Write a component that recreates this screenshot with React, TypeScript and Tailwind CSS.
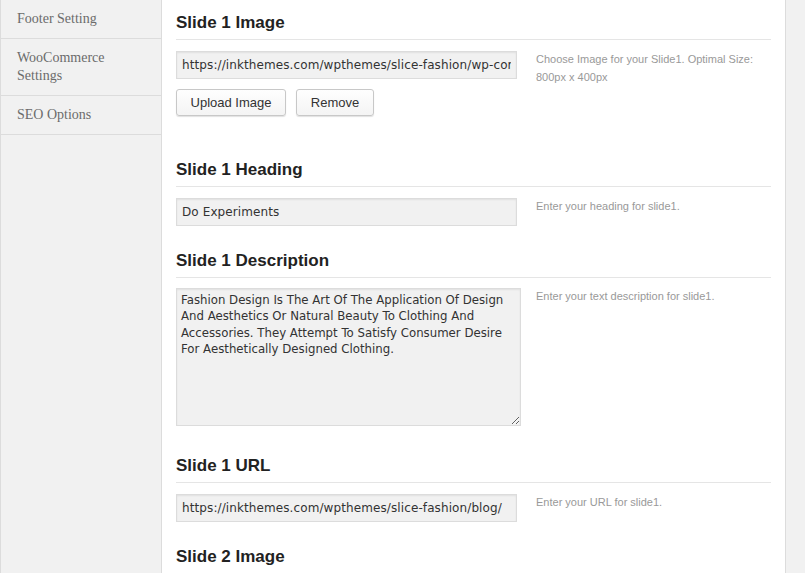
import React from 'react';

const menu = ['Footer Setting', 'WooCommerce Settings', 'SEO Options'];

const inputCls =
  "h-[28px] w-[341px] bg-[#f1f1f1] border border-[#dcdcdc] shadow-[inset_0_1px_2px_rgba(0,0,0,0.07)] px-[5px] text-[12px] tracking-[0.1px] text-[#333] font-['DejaVu_Sans',sans-serif] outline-none";

const btnCls =
  "h-[27px] text-[13px] text-[#333] bg-gradient-to-b from-[#fefefe] to-[#f4f4f4] border border-[#c8c8c8] rounded-[3px] shadow-[0_1px_1px_rgba(0,0,0,0.12)]";

const Heading = ({ children }: { children: React.ReactNode }) => (
  <h3 className="text-[17px] leading-[20px] font-bold text-[#222] pb-[6px] border-b border-[#e5e5e5]">
    {children}
  </h3>
);

const Help = ({ children }: { children: React.ReactNode }) => (
  <p className="ml-[15px] -mt-[1px] w-[225px] text-[11px] leading-[18px] text-[#999]">{children}</p>
);

const App = () => {
  return (
    <div className="flex h-[573px] w-[805px] overflow-hidden font-['Liberation_Sans',Arial,sans-serif]">
      {/* Sidebar */}
      <div className="w-[162px] shrink-0 bg-[#f1f1f1] border-l border-r border-[#dcdcdc]">
        <ul>
          {menu.map((item) => (
            <li
              key={item}
              className="px-[16px] py-[10px] text-[14px] leading-[18px] text-[#6b6b6b] border-b border-[#dcdcdc] font-['Liberation_Serif',Georgia,serif]"
            >
              {item === 'WooCommerce Settings' ? (
                <>
                  WooCommerce
                  <br />
                  Settings
                </>
              ) : (
                item
              )}
            </li>
          ))}
        </ul>
      </div>

      {/* Main */}
      <div className="flex-1 bg-white px-[14px]">
        {/* Slide 1 Image */}
        <div className="pt-[13px]">
          <Heading>Slide 1 Image</Heading>
          <div className="flex mt-[11px]">
            <div className="w-[345px]">
              <input
                readOnly
                className={inputCls}
                value="https://inkthemes.com/wpthemes/slice-fashion/wp-content/uploads/2014/07/slider1.jpg"
              />
              <div className="flex gap-[10px] mt-[10px]">
                <button className={`${btnCls} w-[110px]`}>Upload Image</button>
                <button className={`${btnCls} w-[78px]`}>Remove</button>
              </div>
            </div>
            <Help>Choose Image for your Slide1. Optimal Size: 800px x 400px</Help>
          </div>
        </div>

        {/* Slide 1 Heading */}
        <div className="pt-[44px]">
          <Heading>Slide 1 Heading</Heading>
          <div className="flex mt-[11px]">
            <div className="w-[345px]">
              <input readOnly className={inputCls} value="Do Experiments" />
            </div>
            <Help>Enter your heading for slide1.</Help>
          </div>
        </div>

        {/* Slide 1 Description */}
        <div className="pt-[25px]">
          <Heading>Slide 1 Description</Heading>
          <div className="flex mt-[10px]">
            <div className="w-[345px]">
              <textarea
                readOnly
                className="block h-[138px] w-[345px] bg-[#f1f1f1] border border-[#dcdcdc] shadow-[inset_0_1px_2px_rgba(0,0,0,0.07)] px-[4px] py-[3px] text-[11.75px] leading-[16.3px] text-[#333] font-['DejaVu_Sans',sans-serif] outline-none resize"
                value="Fashion Design Is The Art Of The Application Of Design And Aesthetics Or Natural Beauty To Clothing And Accessories. They Attempt To Satisfy Consumer Desire For Aesthetically Designed Clothing."
              />
            </div>
            <Help>Enter your text description for slide1.</Help>
          </div>
        </div>

        {/* Slide 1 URL */}
        <div className="pt-[30px]">
          <Heading>Slide 1 URL</Heading>
          <div className="flex mt-[11px]">
            <div className="w-[345px]">
              <input
                readOnly
                className={inputCls}
                value="https://inkthemes.com/wpthemes/slice-fashion/blog/"
              />
            </div>
            <Help>Enter your URL for slide1.</Help>
          </div>
        </div>

        {/* Slide 2 Image */}
        <div className="pt-[25px]">
          <Heading>Slide 2 Image</Heading>
        </div>
      </div>

      {/* Right strip */}
      <div className="w-[20px] shrink-0 bg-[#f1f1f1] border-l border-[#dcdcdc]" />
    </div>
  );
};

export default App;
